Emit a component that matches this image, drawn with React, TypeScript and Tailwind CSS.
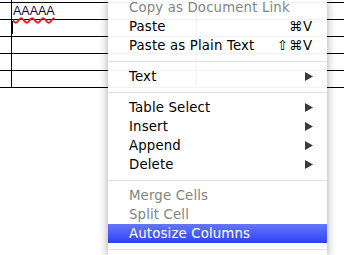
import React from 'react';

type Item =
    | { kind: 'sep' }
    | { kind: 'item'; label: string; shortcut?: string; submenu?: boolean; disabled?: boolean; active?: boolean };

// ===== Menu Data =====
const MENU: Item[] = [
    { kind: 'item', label: 'Copy as Document Link', disabled: true },
    { kind: 'item', label: 'Paste', shortcut: '⌘V' },
    { kind: 'item', label: 'Paste as Plain Text', shortcut: '⇧⌘V' },
    { kind: 'sep' },
    { kind: 'item', label: 'Text', submenu: true },
    { kind: 'sep' },
    { kind: 'item', label: 'Table Select', submenu: true },
    { kind: 'item', label: 'Insert', submenu: true },
    { kind: 'item', label: 'Append', submenu: true },
    { kind: 'item', label: 'Delete', submenu: true },
    { kind: 'sep' },
    { kind: 'item', label: 'Merge Cells', disabled: true },
    { kind: 'item', label: 'Split Cell', disabled: true },
    { kind: 'item', label: 'Autosize Columns', active: true },
    { kind: 'sep' },
];

const ROWS = 6;

function Arrow({ color }: { color: string }) {
    return (
        <svg width="8" height="9" viewBox="0 0 8 9" className="block">
            <polygon points="0,0 8,4.5 0,9" fill={color} />
        </svg>
    );
}

export default function App() {
    return (
        <div className="relative w-[344px] h-[255px] overflow-hidden bg-white">
            {/* table underneath */}
            <div className="mt-[-14px] w-[400px]">
                {Array.from({ length: ROWS }).map((_, i) => (
                    <div key={i} className="flex h-[17px] border-b border-black">
                        <div className="w-[12px] shrink-0 border-r border-black" />
                        <div className="relative w-[185px] shrink-0 border-r border-black">
                            {i === 1 && (
                                <span
                                    className="absolute left-[1px] top-[1px] text-[12.5px] leading-[14px] text-[#0a0a30] underline decoration-wavy decoration-[#e02020] decoration-[1.5px] underline-offset-[2px]"
                                    style={{ fontFamily: '"Liberation Sans", Arial, sans-serif' }}
                                >
                                    AAAAA
                                </span>
                            )}
                            {i === 2 && <div className="absolute left-[-1px] top-[1px] h-[13px] w-[2px] bg-black" />}
                        </div>
                        <div className="flex-1" />
                    </div>
                ))}
            </div>

            {/* context menu */}
            <div
                className="absolute left-[108px] top-[-2px] w-[219px] bg-white/95 shadow-[0_3px_9px_rgba(0,0,0,0.35)] text-[13.3px] tracking-[0.15px]"
                style={{ fontFamily: '"DejaVu Sans", "Lucida Grande", sans-serif' }}
            >
                {MENU.map((item, i) => {
                    if (item.kind === 'sep') {
                        return (
                            <div key={i} className="flex h-[12px] items-center">
                                <div className="h-[1px] w-full bg-[#e1e1e1]" />
                            </div>
                        );
                    }
                    const textColor = item.active ? 'text-white' : item.disabled ? 'text-[#848484]' : 'text-black';
                    return (
                        <div
                            key={i}
                            className={`flex h-[19px] items-center justify-between pl-[21px] pr-[14px] leading-[19px] ${textColor} ${
                                item.active ? 'bg-gradient-to-b from-[#6676f9] to-[#2f3ff5]' : ''
                            }`}
                        >
                            <span>{item.label}</span>
                            {item.shortcut && <span className="tracking-[0.8px]">{item.shortcut}</span>}
                            {item.submenu && <Arrow color="#3a3a3a" />}
                        </div>
                    );
                })}
            </div>
        </div>
    );
}
